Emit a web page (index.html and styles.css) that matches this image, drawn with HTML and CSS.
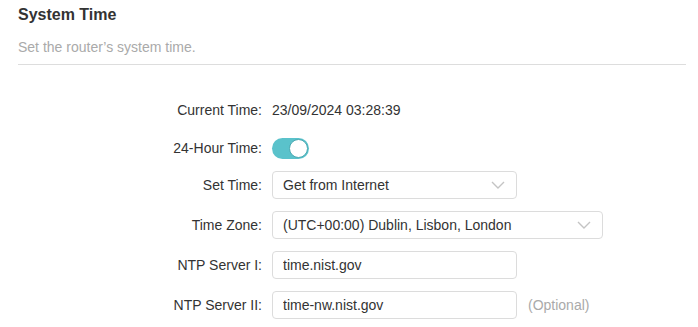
FILE: index.html
```html
<!DOCTYPE html>
<html lang="en">
<head>
    <meta charset="UTF-8">
    <meta name="viewport" content="width=device-width, initial-scale=1.0">
    <title>System Time</title>
    <link rel="stylesheet" href="styles.css">
</head>
<body>

    <div class="panel">
        <h2 class="panel-title">System Time</h2>
        <p class="panel-desc">Set the router&rsquo;s system time.</p>

        <form class="settings">
            <div class="row row-text">
                <label class="row-label">Current Time:</label>
                <span class="row-value">23/09/2024 03:28:39</span>
            </div>

            <div class="row row-toggle">
                <label class="row-label">24-Hour Time:</label>
                <span class="toggle on"><span class="knob"></span></span>
            </div>

            <div class="row">
                <label class="row-label">Set Time:</label>
                <div class="select">
                    <span>Get from Internet</span>
                    <svg class="chevron" width="14" height="8" viewBox="0 0 14 8"><path d="M1 1l6 6 6-6" fill="none" stroke="#c4c4c4" stroke-width="1.4"/></svg>
                </div>
            </div>

            <div class="row">
                <label class="row-label">Time Zone:</label>
                <div class="select wide">
                    <span>(UTC+00:00) Dublin, Lisbon, London</span>
                    <svg class="chevron" width="14" height="8" viewBox="0 0 14 8"><path d="M1 1l6 6 6-6" fill="none" stroke="#c4c4c4" stroke-width="1.4"/></svg>
                </div>
            </div>

            <div class="row">
                <label class="row-label">NTP Server I:</label>
                <input class="field" type="text" value="time.nist.gov">
            </div>

            <div class="row">
                <label class="row-label">NTP Server II:</label>
                <input class="field" type="text" value="time-nw.nist.gov">
                <span class="hint">(Optional)</span>
            </div>
        </form>
    </div>

</body>
</html>
```

FILE: styles.css
```css
body {
    margin: 0;
    font-family: "Liberation Sans", Arial, sans-serif;
    font-size: 14px;
    color: #333;
    background: #fff;
}
.panel {
    padding: 4px 12px 0 17px;
}
.panel-title {
    margin: 0 0 0 1px;
    font-size: 16px;
    line-height: 22px;
    font-weight: bold;
    color: #333;
}
.panel-desc {
    margin: 13px 0 0 1px;
    padding-bottom: 9px;
    font-size: 14px;
    line-height: 16px;
    color: #aaa;
    border-bottom: 1px solid #ddd;
}
.settings {
    padding-top: 31px;
}
.row {
    display: flex;
    align-items: center;
    height: 28px;
    margin-bottom: 12px;
}
.row-text {
    margin-bottom: 10px;
}
.row-toggle {
    margin-bottom: 9px;
}
.row-label {
    width: 245px;
    padding-right: 10px;
    text-align: right;
    color: #333;
}
.row-value {
    color: #333;
}
.toggle {
    position: relative;
    display: inline-block;
    width: 37px;
    height: 21px;
    border-radius: 11px;
    background: #5ac2cb;
}
.toggle .knob {
    position: absolute;
    top: 1px;
    right: 1px;
    width: 19px;
    height: 19px;
    border-radius: 50%;
    background: #fff;
    box-sizing: border-box;
    border: 1px solid #4aa9b2;
}
.select,
.field {
    box-sizing: border-box;
    width: 245px;
    height: 28px;
    border: 1px solid #dcdcdc;
    border-radius: 4px;
    background: #fff;
}
.select {
    display: flex;
    align-items: center;
    justify-content: space-between;
    padding: 0 11px 0 10px;
}
.select.wide {
    width: 331px;
}
.chevron {
    display: block;
}
.field {
    padding: 0 10px;
    font-family: inherit;
    font-size: 14px;
    color: #333;
    outline: none;
}
.hint {
    margin-left: 11px;
    color: #aaa;
}
```
